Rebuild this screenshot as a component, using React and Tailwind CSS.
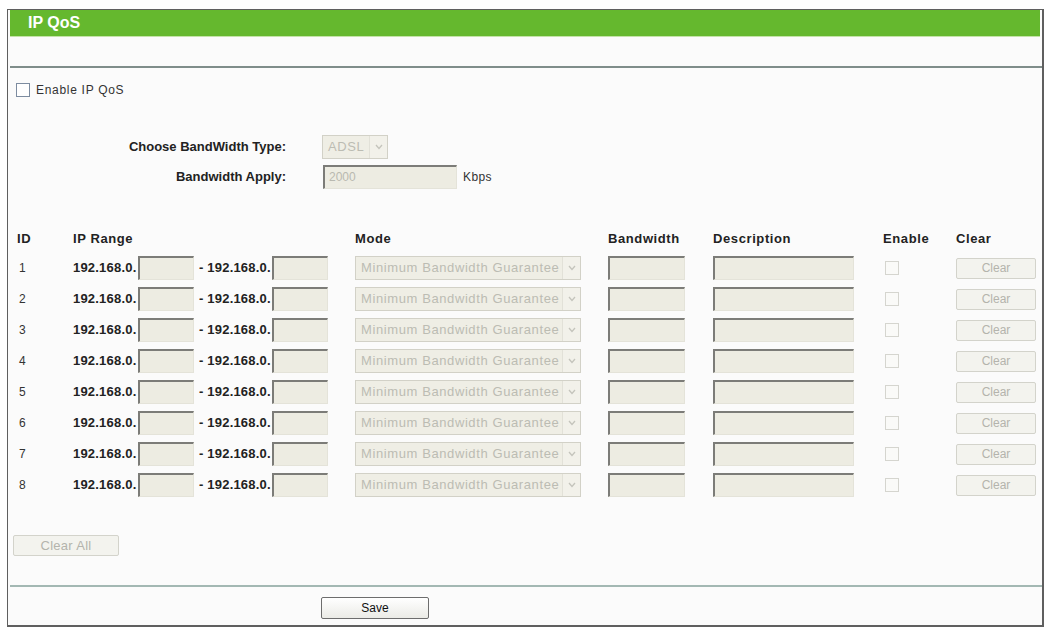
const font = "font-['Liberation_Sans',Arial,sans-serif]";

const rows = [1, 2, 3, 4, 5, 6, 7, 8];

// sunken, greyed-out text box
function Field({ className = '', children }) {
  return (
    <div
      className={`h-[24px] bg-[#edece2] border-t-2 border-l-2 border-r border-b border-t-[#7c7c78] border-l-[#7c7c78] border-r-[#e4e3d9] border-b-[#e4e3d9] text-[12px] text-[#b9b9b0] pl-1 leading-[20px] ${className}`}
    >
      {children}
    </div>
  );
}

function Chevron() {
  return (
    <svg width="10" height="8" viewBox="0 0 10 8">
      <polyline points="2,2 5,5.5 8,2" fill="none" stroke="#c4c4bc" strokeWidth="1.3" />
    </svg>
  );
}

function DropDown({ value, className = '' }) {
  return (
    <div
      className={`h-[24px] flex items-center bg-[#efeee5] border border-[#d2d1c7] overflow-hidden ${className}`}
    >
      <span className="flex-1 pl-[5px] text-[13px] tracking-[0.6px] text-[#bcbcb3] whitespace-nowrap overflow-hidden">
        {value}
      </span>
      <span className="w-[18px] h-full flex items-center justify-center border-l border-[#e2e1d8] bg-[#f2f1ea]">
        <Chevron />
      </span>
    </div>
  );
}

function GreyButton({ label, className = '' }) {
  return (
    <div
      className={`flex items-center justify-center bg-[#f3f3ee] border border-[#d3d3cb] rounded-[2px] text-[#b4b4ac] ${className}`}
    >
      {label}
    </div>
  );
}

function QosRow({ id }) {
  return (
    <div className="grid grid-cols-[56px_282px_253px_105px_170px_73px_81px] items-center h-[24px]">
      <div className="pl-[2px] text-[12px] text-[#333]">{id}</div>
      <div className="flex items-center">
        <span className="w-[65px] text-[13px] font-bold tracking-[0.2px] text-[#222]">192.168.0.</span>
        <Field className="w-[56px]" />
        <span className="w-[78px] pl-[5px] text-[13px] font-bold tracking-[0.2px] text-[#222]">- 192.168.0.</span>
        <Field className="w-[56px]" />
      </div>
      <DropDown value="Minimum Bandwidth Guarantee" className="w-[226px]" />
      <Field className="w-[77px]" />
      <Field className="w-[141px]" />
      <div className="pl-[2px]">
        <div className="w-[14px] h-[14px] border border-[#d5d5cf] bg-[#fafaf8]" />
      </div>
      <GreyButton label="Clear" className="w-[80px] h-[21px] text-[12px]" />
    </div>
  );
}

export default function App() {
  const head = 'text-[13px] font-bold tracking-[0.6px] text-[#222]';
  return (
    <div className={`${font} bg-white w-[1048px] h-[629px] pt-[9px] pl-[7px]`}>
      <div className="w-[1037px] h-[618px] bg-[#fbfbfb] border-l border-t border-r-2 border-b-2 border-[#5f5f5f] flex flex-col">
        {/* title bar */}
        <div className="h-[26px] ml-[2px] mr-[2px] bg-[#65b82e] flex items-center pl-[18px]">
          <span className="text-white text-[16px] font-bold">IP QoS</span>
        </div>
        <div className="h-px ml-[2px] mr-[2px] bg-[#c4e3a8]" />
        <div className="h-[29px]" />
        <div className="h-[2px] ml-[2px] bg-[#7f8d8a]" />

        {/* enable switch */}
        <div className="flex items-center mt-[15px] ml-[8px] h-[14px]">
          <div className="w-[14px] h-[14px] border border-[#7d8ca0] bg-white" />
          <span className="ml-[6px] text-[12px] tracking-[0.7px] text-[#333]">Enable IP QoS</span>
        </div>

        {/* bandwidth settings */}
        <div className="flex items-center mt-[38px] h-[24px]">
          <span className="w-[278px] text-right text-[13px] font-bold text-[#222]">Choose BandWidth Type:</span>
          <DropDown value="ADSL" className="ml-[36px] w-[66px]" />
        </div>
        <div className="flex items-center mt-[6px] h-[23px]">
          <span className="w-[278px] text-right text-[13px] font-bold text-[#222]">Bandwidth Apply:</span>
          <Field className="ml-[37px] w-[134px] h-[23px]">2000</Field>
          <span className="ml-[6px] text-[12px] tracking-[0.4px] text-[#333]">Kbps</span>
        </div>

        {/* rule table */}
        <div className="ml-[9px] mt-[41px] flex flex-col">
          <div className="grid grid-cols-[56px_282px_253px_105px_170px_73px_81px] items-center h-[16px]">
            <span className={head}>ID</span>
            <span className={head}>IP Range</span>
            <span className={head}>Mode</span>
            <span className={head}>Bandwidth</span>
            <span className={head}>Description</span>
            <span className={head}>Enable</span>
            <span className={head}>Clear</span>
          </div>
          <div className="mt-[11px] flex flex-col gap-[7px]">
            {rows.map((id) => (
              <QosRow key={id} id={id} />
            ))}
          </div>
        </div>

        <GreyButton label="Clear All" className="ml-[5px] mt-[38px] w-[106px] h-[21px] text-[13px] tracking-[0.3px]" />

        <div className="h-[2px] ml-[2px] mt-[29px] bg-[#a3b8b3]" />

        <div className="mt-[10px] ml-[313px] w-[108px] h-[22px] flex items-center justify-center border border-[#6d6d6d] rounded-[2px] bg-gradient-to-b from-white to-[#ebebe6] text-[12px] text-[#111]">
          Save
        </div>
      </div>
    </div>
  );
}
